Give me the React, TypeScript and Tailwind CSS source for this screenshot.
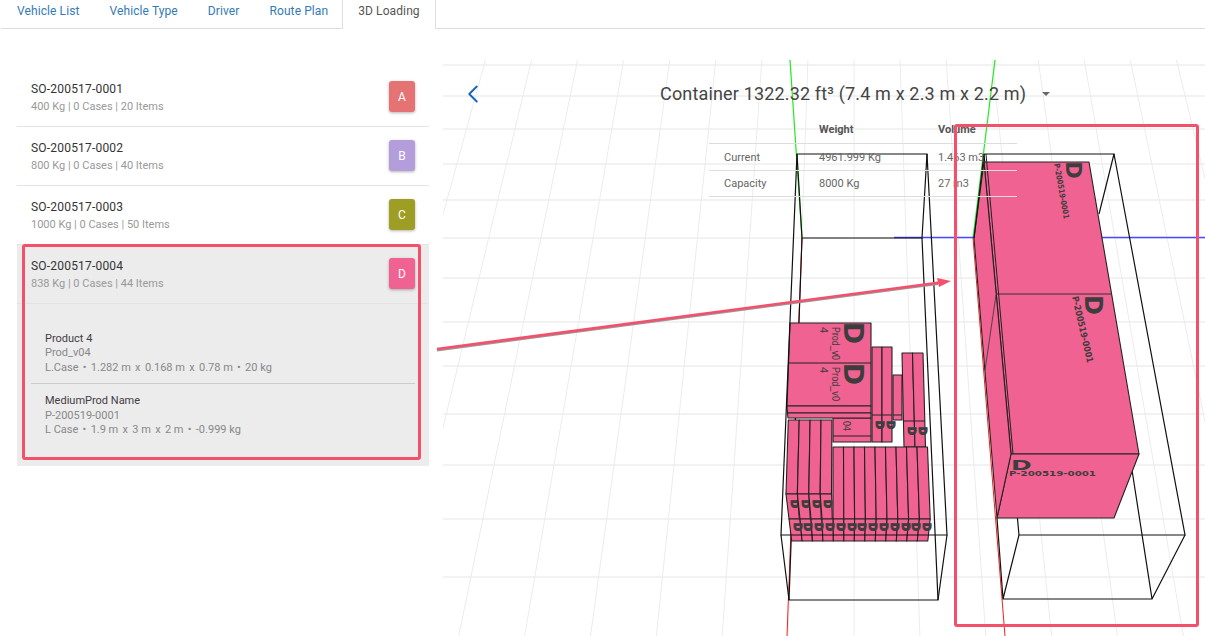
import { ReactNode } from "react";
import { ChevronLeft } from "lucide-react";

const PINK = "#f06292";
const NOTE = "#f4506c";

const tabs = ["Vehicle List", "Vehicle Type", "Driver", "Route Plan", "3D Loading"];

const orders = [
  { id: "SO-200517-0001", info: "400 Kg | 0 Cases | 20 Items", letter: "A", color: "bg-[#e57373]" },
  { id: "SO-200517-0002", info: "800 Kg | 0 Cases | 40 Items", letter: "B", color: "bg-[#b39ddb]" },
  { id: "SO-200517-0003", info: "1000 Kg | 0 Cases | 50 Items", letter: "C", color: "bg-[#9e9d24]" },
];

const OrderRow = ({ id, info, letter, color, line }: { id: string; info: string; letter: string; color: string; line: string }) => (
  <div className={`h-[59px] flex items-center justify-between px-[14px] border-b ${line}`}>
    <div className="pt-[2px]">
      <p className="text-[12px] leading-[17px] tracking-[0.2px] text-[#333]">{id}</p>
      <p className="text-[11px] leading-[17px] text-[#999]">{info}</p>
    </div>
    <span className={`w-[26px] h-[31px] rounded-[3px] flex items-center justify-center text-[12px] text-white shadow-[0_1px_3px_rgba(0,0,0,0.3)] ${color}`}>
      {letter}
    </span>
  </div>
);

const Sep = ({ children }: { children: string }) => <span className="mx-[4.3px]">{children}</span>;

const Product = ({ name, code, spec, last }: { name: string; code: string; spec: ReactNode; last?: boolean }) => (
  <div className={`pl-[14px] text-[11px] leading-[14.5px] text-[#888] ${last ? "pt-[10px]" : "pb-[8px] border-b border-[#ccc]"}`}>
    <p className="text-[#443c44]">{name}</p>
    <p>{code}</p>
    <p>{spec}</p>
  </div>
);

// floor grid, converges towards the top
const gridY = [65, 96, 129, 164, 200, 238, 278, 322, 366, 414, 465, 519, 577];
const gridK = [-12, -11, -10, -9, -8, -7, -6, -5, -4, -3, -2, -1, 0, 1, 2, 3, 4, 5, 6, 7, 8];
const gridX = (k: number, y: number) => 854 + k * (44 + 0.0344 * y);

const Face = ({ points }: { points: string }) => (
  <polygon points={points} fill={PINK} stroke="#222" strokeWidth={1.1} strokeLinejoin="round" />
);

const Wire = ({ d, w = 1.2 }: { d: string; w?: number }) => (
  <path d={d} fill="none" stroke="#111" strokeWidth={w} />
);

const Mark = ({ x, y, size = 10 }: { x: number; y: number; size?: number }) => (
  <text
    transform={`translate(${x} ${y}) rotate(90)`}
    fontSize={size}
    fontWeight={700}
    textAnchor="middle"
    dominantBaseline="central"
    fill="#3d3d3d"
    stroke={size < 15 ? "#3d3d3d" : "none"}
    strokeWidth={1}
    fontFamily="DejaVu Sans"
  >
    D
  </text>
);

const Label = ({ x, y, angle, len, size, plain, children }: { x: number; y: number; angle: number; len: number; size: number; plain?: boolean; children: string }) => (
  <text
    transform={`translate(${x} ${y}) rotate(${angle})`}
    fontSize={size}
    fill="#3d3d3d"
    textLength={len}
    lengthAdjust="spacingAndGlyphs"
    fontFamily={plain ? "Liberation Sans" : "DejaVu Sans"}
    fontWeight={plain ? 400 : 600}
  >
    {children}
  </text>
);

const LeftCargo = () => (
  <g>
    {/* upper stack */}
    <Face points="833,418 871,418 871,442 833,442" />
    <path d="M833 436H871" stroke="#222" />
    <Face points="790,323 871,323 871,406 787,406" />
    <path d="M788 363H871" stroke="#222" />
    <Face points="787,406 871,406 871,413 787.5,413" />
    <Face points="787.5,413 871,413 871,418 788,418" />
    <Label x={843} y={421} angle={90} len={10} size={10} plain>04</Label>
    <Mark x={853} y={333} size={27} />
    <Mark x={853} y={374} size={27} />
    <Label x={832} y={327} angle={90} len={33} size={11} plain>Prod_v0</Label>
    <Label x={832} y={367} angle={90} len={34} size={11} plain>Prod_v0</Label>
    <Label x={820} y={327} angle={90} len={6} size={11} plain>4</Label>
    <Label x={820} y={367} angle={90} len={6} size={11} plain>4</Label>

    {/* middle columns */}
    <Face points="872,347 882,347 882,442 872,442" />
    <Face points="882,347 892,347 892,442 882,442" />
    <path d="M872 415H892" stroke="#222" />
    <Mark x={879.5} y={425} />
    <Mark x={890} y={425} />
    <Face points="893,375 902,375 902,420 893,420" />
    <path d="M893 415H902" stroke="#222" />
    <Face points="902,353 912.5,353 915,447 904,447" />
    <Face points="912.5,353 923,353 925.5,447 915,447" />
    <path d="M903 421H925" stroke="#222" />
    <Mark x={911} y={431} />
    <Mark x={922} y={431} />

    {/* lower row, 9 long boxes */}
    {Array.from({ length: 9 }, (_, i) => (
      <g key={i}>
        <Face points={`${833 + i * 10.5},447 ${843.5 + i * 10.5},447 ${843.8 + i * 10.8},519 ${833 + i * 10.8},519`} />
        <Face points={`${833 + i * 10.8},519 ${843.8 + i * 10.8},519 ${843.8 + i * 10.5},541 ${833.3 + i * 10.5},541`} />
      </g>
    ))}
    {/* lower row, 4 boxes in front */}
    {Array.from({ length: 4 }, (_, i) => (
      <g key={i}>
        <Face points={`${788.3 + i * 10.9},420 ${799.2 + i * 10.9},420 ${797.3 + i * 11.4},494 ${786 + i * 11.4},494`} />
        <Face points={`${786 + i * 11.4},494 ${797.4 + i * 11.4},494 ${799.3 + i * 11},519 ${789 + i * 11},519`} />
        <Face points={`${789 + i * 11},519 ${800 + i * 11},519 ${802 + i * 10.4},541 ${791.7 + i * 10.4},541`} />
        <Mark x={794.5 + i * 11} y={504} />
      </g>
    ))}
    {Array.from({ length: 13 }, (_, i) => (
      <Mark key={i} x={797 + i * 10.8} y={527} />
    ))}
  </g>
);

const RightCargo = () => (
  <g>
    <Face points="984,162 1089,162 1139,454 1011,454" />
    <Face points="1011,454 1139,454 1114,518 997,518" />
    <Face points="974,238 984,162 1011,454 997,518" />
    <path d="M996 294H1112" stroke="#333" />
    <path d="M996 295L985 370" stroke="#333" strokeWidth={0.8} />
    <path d="M986 154L1013 454" stroke="#222" strokeWidth={1} />
    <Mark x={1073} y={170} size={21} />
    <Label x={1054} y={164} angle={80} len={56} size={8}>P-200519-0001</Label>
    <Mark x={1093} y={305} size={24} />
    <Label x={1072} y={297} angle={77} len={68} size={9}>P-200519-0001</Label>
    <text transform="translate(1011 470) scale(1 0.55)" fontSize={25} fontWeight={700} fill="#3d3d3d" fontFamily="DejaVu Sans">D</text>
    <text transform="translate(1009 476) scale(1 0.6)" fontSize={12} fontWeight={600} fill="#3d3d3d" fontFamily="DejaVu Sans" textLength={87} lengthAdjust="spacingAndGlyphs">P-200519-0001</text>
  </g>
);

const Scene = () => (
  <svg className="absolute inset-0" width="762" height="607" viewBox="443 29 762 607">
    {gridY.map((y) => (
      <path key={y} d={`M443 ${y}H1205`} stroke="#eeeeee" strokeWidth={1.5} />
    ))}
    {gridK.map((k) => (
      <path key={k} d={`M${gridX(k, 60)} 60L${gridX(k, 636)} 636`} stroke="#ececec" strokeWidth={1} />
    ))}

    {/* axes */}
    <path d="M790 60L802 238" stroke="#22e822" strokeWidth={1.2} fill="none" />
    <path d="M995 60L973 238" stroke="#22e822" strokeWidth={1.2} fill="none" />
    <path d="M802 238L787 636" stroke="#f02020" strokeWidth={1} fill="none" />
    <path d="M973 238L1005 636" stroke="#f02020" strokeWidth={1} fill="none" />
    <path d="M894 237.5H1205" stroke="#4a4aff" strokeWidth={1.5} />

    {/* left container */}
    <Wire d="M797 154H927L922 238H802Z" />
    <Wire d="M922 238L938 600H789L802 238" />
    <LeftCargo />
    <Wire d="M797 154L781 535H947L927 154" />
    <Wire d="M781 535L789 600M947 535L938 600" />

    {/* right container */}
    <Wire d="M984 154H1114L1099 214" />
    <Wire d="M1114 154L1185 535H1019L984 154" />
    <Wire d="M1132 470L1152 599H1003L1019 535M1185 535L1152 599M997 518L1003 599" />
    <RightCargo />
    <Wire d="M984 154L974 238" />
  </svg>
);

const Notes = () => (
  <>
    <svg className="absolute inset-0 pointer-events-none" width="1205" height="636" viewBox="0 0 1205 636">
      <path d="M437 349.5L938 283" stroke="#999" strokeWidth={2.6} transform="translate(0 0.7)" />
      <path d="M437 349L940 282.5" stroke={NOTE} strokeWidth={2.6} />
      <path d="M951 281L937 278L939 287Z" fill={NOTE} />
    </svg>
    <div className="absolute left-[22px] top-[244px] w-[399px] h-[216px] border-[3px] border-[#f4506c] rounded-[3px] pointer-events-none" />
    <div className="absolute left-[954px] top-[124px] w-[245px] h-[503px] border-[3px] border-[#f4506c] rounded-[3px] pointer-events-none" />
  </>
);

export default function App() {
  return (
    <div className="relative w-[1205px] h-[636px] overflow-hidden bg-white flex flex-col font-['Roboto',sans-serif]">
      <nav className="h-[29px] pl-[1px] ml-[1px] flex border-b border-[#ddd] text-[12px] tracking-[0.1px] shrink-0">
        {tabs.map((t) =>
          t === "3D Loading" ? (
            <span key={t} className="h-[29px] px-[15px] leading-[22px] text-[#555] bg-white border-x border-[#ddd] -ml-px">
              {t}
            </span>
          ) : (
            <span key={t} className="px-[15px] leading-[22px] text-[#337ab7]">
              {t}
            </span>
          )
        )}
      </nav>

      <div className="flex flex-1 min-h-0">
        <aside className="w-[443px] pl-[17px] pr-[14px] pt-[38.5px] shrink-0">
          {orders.map((o) => (
            <OrderRow key={o.id} {...o} line="border-[#e4e4e4]" />
          ))}
          <div className="h-[221px] bg-[#ececec]">
            <OrderRow id="SO-200517-0004" info="838 Kg | 0 Cases | 44 Items" letter="D" color="bg-[#f06292]" line="border-[#e2e2e2]" />
            <div className="mx-[14px] pt-[28px]">
              <Product
                name="Product 4"
                code="Prod_v04"
                spec={<>L.Case<Sep>•</Sep>1.282 m<Sep>x</Sep>0.168 m<Sep>x</Sep>0.78 m<Sep>•</Sep>20 kg</>}
              />
              <Product
                name="MediumProd Name"
                code="P-200519-0001"
                spec={<>L Case<Sep>•</Sep>1.9 m<Sep>x</Sep>3 m<Sep>x</Sep>2 m<Sep>•</Sep>-0.999 kg</>}
                last
              />
            </div>
          </div>
        </aside>

        <main className="relative flex-1">
          <Scene />
          <div className="relative">
            <header className="h-[86px] pt-[44px] flex items-center">
              <ChevronLeft size={30} strokeWidth={1.5} className="ml-[15px] text-[#1565c0] shrink-0" />
              <h1 className="ml-[172px] -mt-[2px] text-[18px] tracking-[0.16px] text-[#444] whitespace-nowrap">Container 1322.32 ft³ (7.4 m x 2.3 m x 2.2 m)</h1>
              <span className="ml-[16px] w-0 h-0 border-x-[4px] border-x-transparent border-t-[4px] border-t-[#666]" />
            </header>
            <table className="ml-[266px] w-[308px] table-fixed border-collapse text-[11px] text-[#666]">
              <thead>
                <tr className="h-[28px] border-b border-[#ddd] font-bold text-left text-[#555]">
                  <th className="w-[110px]"></th>
                  <th className="w-[119px] pt-[2px]">Weight</th>
                  <th className="pt-[2px]">Volume</th>
                </tr>
              </thead>
              <tbody>
                <tr className="h-[27px] border-b border-[#ddd]">
                  <td className="pl-[15px] pt-[3px]">Current</td>
                  <td className="pt-[3px]">4961.999 Kg</td>
                  <td className="pt-[3px]">1.463 m3</td>
                </tr>
                <tr className="h-[26px] border-b border-[#ddd]">
                  <td className="pl-[15px] pt-[2px]">Capacity</td>
                  <td className="pt-[2px]">8000 Kg</td>
                  <td className="pt-[2px]">27 m3</td>
                </tr>
              </tbody>
            </table>
          </div>
        </main>
      </div>

      <Notes />
    </div>
  );
}
